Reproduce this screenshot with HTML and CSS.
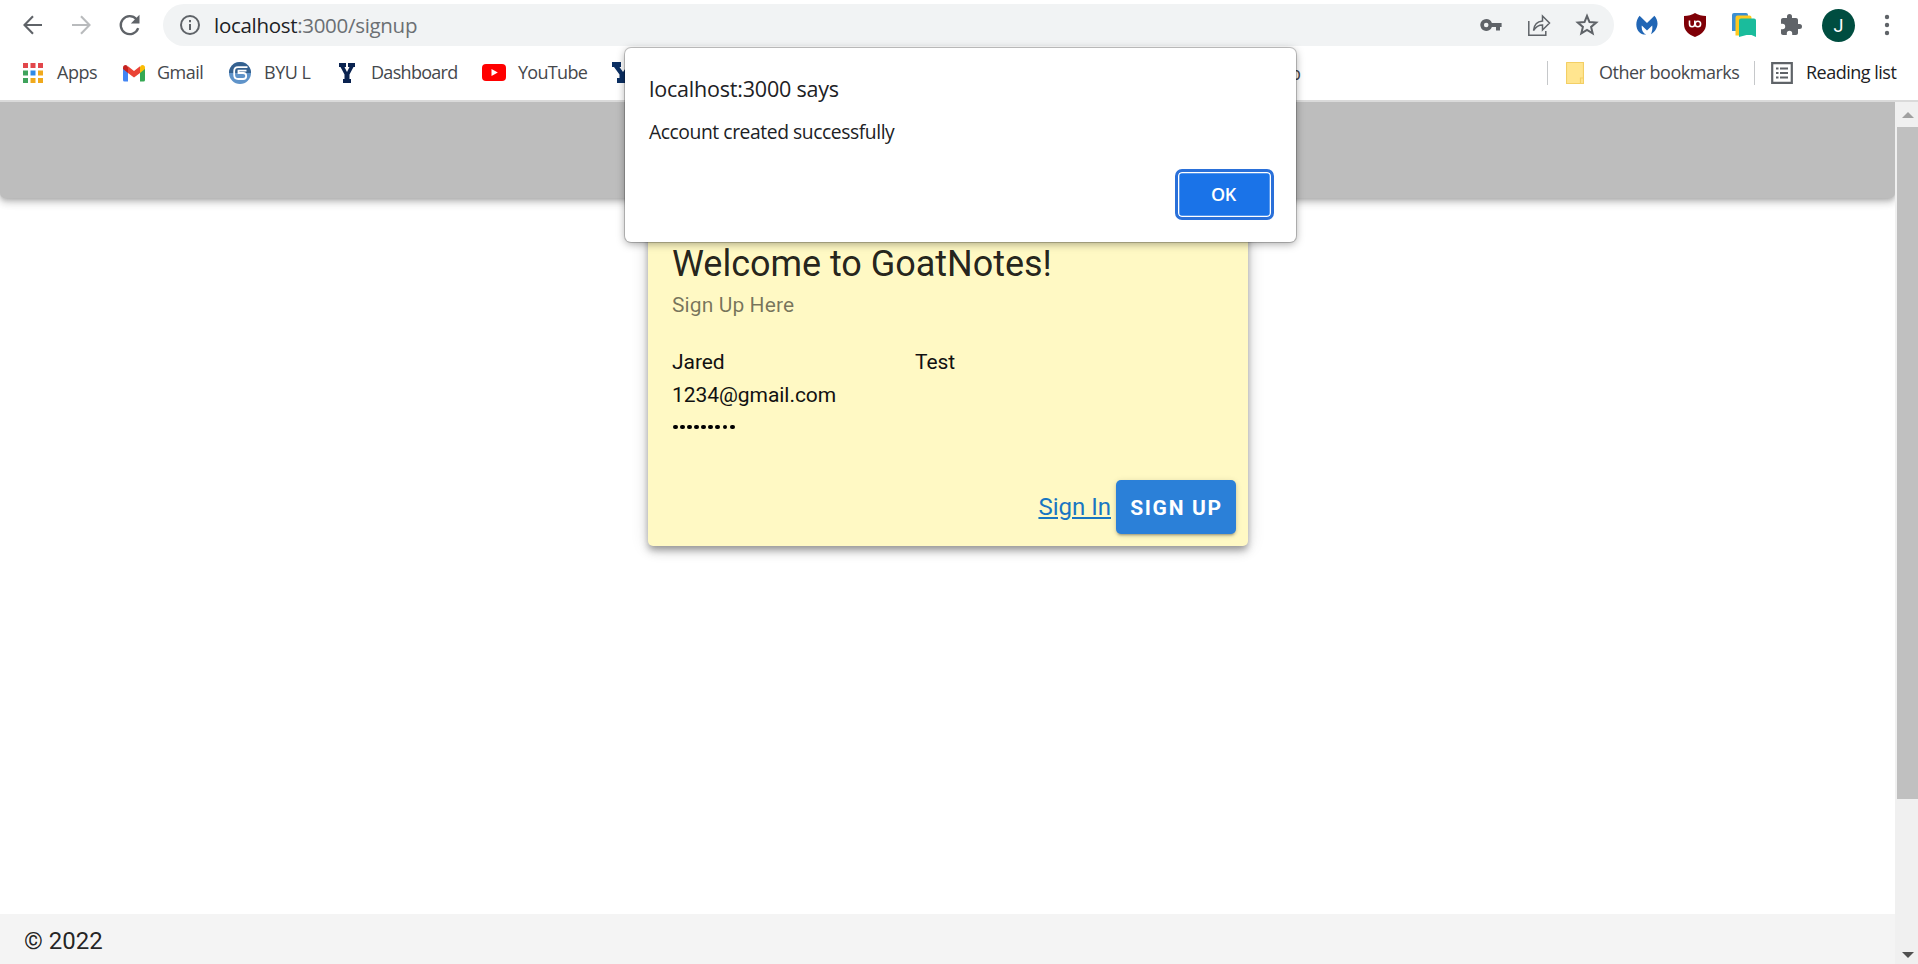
FILE: index.html
```
<!DOCTYPE html>
<html lang="en">
<head>
<meta charset="utf-8">
<title>GoatNotes</title>
<link rel="stylesheet" href="styles.css">
</head>
<body>
<div class="browser">
  <div class="toolbar">
    <div class="nav">
      <svg class="ic24" viewBox="0 0 24 24"><path d="M21 12H4M12 3.300 3.500 12 12 20.700" fill="none" stroke="#5f6368" stroke-width="2.100"/></svg>
      <svg class="ic24" viewBox="0 0 24 24"><path d="M3 12h17M12 3.300 20.500 12 12 20.700" fill="none" stroke="#b9bbbd" stroke-width="2.100"/></svg>
      <svg class="ic24 reload" viewBox="0 0 24 24"><path d="M20.200 15.200A9 9 0 1 1 18.500 6.200" fill="none" stroke="#5f6368" stroke-width="2.300"/><path d="M21.500 1.800v8.700h-8.700z" fill="#5f6368"/></svg>
    </div>
    <div class="omnibox">
      <svg class="info" viewBox="0 0 22 22"><circle cx="11" cy="11" r="9" fill="none" stroke="#5f6368" stroke-width="2"/><path d="M10 10h2v6h-2zM10 6h2v2.200h-2z" fill="#5f6368"/></svg>
      <span class="url">localhost<span class="path">:3000/signup</span></span>
      <div class="omni-icons">
        <svg class="ic24" viewBox="0 0 24 24"><path fill-rule="evenodd" fill="#5f6368" d="M7.200 6a6 6 0 1 0 5.700 8H17v3.500h4V14h1.600v-4h-9.700A6 6 0 0 0 7.200 6zm0 3.700a2.300 2.300 0 1 1 0 4.600 2.300 2.300 0 0 1 0-4.600z"/></svg>
        <svg class="ic24" viewBox="0 0 24 24"><path d="M1.800 8v14.200h17V18M6.500 17.500c.5-5.500 3-9 9-9.500V3l7 7-7 7v-5c-4 0-6.500 1.500-9 5.500z" fill="none" stroke="#5f6368" stroke-width="1.500"/></svg>
        <svg class="ic24" viewBox="0 0 24 24"><path d="m12 3 2.500 6.100 6.700.5-5.100 4.300 1.600 6.500-5.700-3.500-5.700 3.500 1.600-6.500-5.100-4.300 6.700-.5z" fill="none" stroke="#5f6368" stroke-width="2"/></svg>
      </div>
    </div>
    <div class="extensions">
      <svg class="ic24" viewBox="0 0 24 24"><path d="M4.600 2.800 12 10l7.400-7.200c3.600 4 4 9 1.600 13.200-1 2-2.500 3.800-5 5.200 1-2.500 1.700-5.200 1.200-8.600L12 17.500l-5.200-4.900c-.6 4.300 1.200 7.400 4.400 9C2 22-2 10.500 4.600 2.800z" fill="#2166b5"/></svg>
      <svg class="ic24" viewBox="0 0 24 24"><path d="M12 0c3 2 7 3 11 3v8c0 7-5 10.500-11 13C6 21.500 1 18 1 11V3c4 0 8-1 11-3z" fill="#7f0007"/><path d="M6.500 7.500V11q0 2.800 2.600 2.800T11.800 11V7.500" fill="none" stroke="#fff" stroke-width="1.600"/><circle cx="14.900" cy="11" r="2.700" fill="none" stroke="#fff" stroke-width="1.600"/></svg>
      <svg class="tabs" viewBox="0 0 26 26"><path d="M1 3q0-2 2-2h12q2 0 2 2v3H7v13H1z" fill="#3c8fd1"/><path d="M4.500 5.500q0-2 2-2h12q2 0 2 2v3H10v15H4.500z" fill="#ffc91f"/><path d="M8 8.500q0-2 2-2h13q2 0 2 2V25l-4.500-2h-5L8 25z" fill="#1abc9c"/></svg>
      <svg class="ic24" viewBox="0 0 24 24"><path d="M20.500 11H19V7c0-1.100-.9-2-2-2h-4V3.500a2.500 2.500 0 0 0-5 0V5H4c-1.100 0-2 .9-2 2v3.800h1.500a2.700 2.700 0 0 1 0 5.400H2V20c0 1.100.9 2 2 2h3.800v-1.500a2.700 2.700 0 0 1 5.400 0V22H17c1.100 0 2-.9 2-2v-4h1.500a2.500 2.500 0 0 0 0-5z" fill="#5f6368"/></svg>
      <span class="avatar">J</span>
      <svg class="ic24" viewBox="0 0 24 24"><g fill="#5f6368"><circle cx="12" cy="4" r="2.200"/><circle cx="12" cy="12" r="2.200"/><circle cx="12" cy="20" r="2.200"/></g></svg>
    </div>
  </div>

  <div class="bookmarks">
    <div class="bm bm-apps">
      <svg class="bm-ic" viewBox="0 0 22 22"><path d="M1 1h5v5H1zM8.500 1h5v5h-5zM16 1h5v5h-5z" fill="#e2474b"/><path d="M1 8.500h5v5H1zM1 16h5v5H1z" fill="#3fa35c"/><path d="M8.500 8.500h5v5h-5z" fill="#2f8ae8"/><path d="M16 8.500h5v5h-5zM8.500 16h5v5h-5zM16 16h5v5h-5z" fill="#f0a91c"/></svg>
      <span class="t-apps">Apps</span>
    </div>
    <div class="bm bm-gmail">
      <svg class="bm-ic" viewBox="0 0 22 22"><path d="M0 6v12q0 1.500 1.500 1.500H5V9z" fill="#4285f4"/><path d="M22 6v12q0 1.500-1.500 1.500H17V9z" fill="#34a853"/><path d="M17 5v6l5-4V5.500c0-2.500-2.500-3.200-4-2z" fill="#fbbc04"/><path d="M5 5v6L0 7V5.500c0-2.500 2.500-3.200 4-2z" fill="#c5221f"/><path d="M5 4.300 11 9l6-4.700V11l-6 4.500L5 11z" fill="#ea4335"/></svg>
      <span class="t-gmail">Gmail</span>
    </div>
    <div class="bm bm-byul">
      <svg class="bm-ic" viewBox="0 0 22 22"><circle cx="11" cy="11" r="11" fill="#5f93c9"/><path d="M0 11a11 11 0 0 1 22 0z" fill="#35618f"/><path d="M18.500 5.200H9Q5.200 5.200 5.200 9v4q0 4 4 4h5q3 0 3-3t-3-3H9.500V8.700h8" fill="none" stroke="#fff" stroke-width="1.800"/></svg>
      <span class="t-byul">BYU L</span>
    </div>
    <div class="bm bm-dash">
      <svg class="y-ic" viewBox="0 0 16 20"><path d="M0 0h7v4H5.500L8 9l2.500-5H9V0h7v4h-1.500L10.500 11.500V16H12v4H4v-4h1.500v-4.500L1.500 4H0z" fill="#0a2350"/></svg>
      <span class="t-dash">Dashboard</span>
    </div>
    <div class="bm bm-yt">
      <svg class="yt-ic" viewBox="0 0 24 17"><rect width="24" height="17" rx="4" fill="#f00"/><path d="m9.500 5 6.300 3.500-6.300 3.500z" fill="#fff"/></svg>
      <span class="t-yt">YouTube</span>
    </div>
    <svg class="y2-ic" viewBox="0 0 22 21"><path d="M0 0h9v5H7.500L11 10l3.500-5H13V0h9v5h-2l-5.500 7.500V16H17v5H5v-5h2.500v-3.500L2 5H0z" fill="#0b2f63"/></svg>
    <span class="cut">Map</span>
    <div class="bm-right">
      <i class="sep"></i>
      <svg class="folder" viewBox="0 0 18 22"><path d="M0 0h17.500v15H18v7H0z" fill="#ffe58f"/><path d="M.5.500h17V16M.5.500v21h17V16h-3v5.500" fill="none" stroke="#f3cf65" stroke-width="1.200"/></svg>
      <span class="t-other">Other bookmarks</span>
      <i class="sep sep2"></i>
      <svg class="list-ic" viewBox="0 0 22 22"><path d="M1.200 1.200h19.600v19.600H1.200z" fill="none" stroke="#5f6368" stroke-width="2.200"/><path d="M5 5.500h2.500v2H5zm4 0h8v2H9zM5 10h2.500v2H5zm4 0h8v2H9zM5 14.500h2.500v2H5zm4 0h8v2H9z" fill="#5f6368"/></svg>
      <span class="t-read">Reading list</span>
    </div>
  </div>

  <div class="viewport">
    <div class="page">
      <header class="appbar"></header>
      <main class="main">
        <section class="card">
          <h1 class="title"><span>Welcome to GoatNotes!</span></h1>
          <p class="subtitle">Sign Up Here</p>
          <div class="fields">
            <div class="field">Jared</div>
            <div class="field">Test</div>
            <div class="field email">1234@gmail.com</div>
            <div class="dots"><i></i><i></i><i></i><i></i><i></i><i></i><i></i><i></i><i></i></div>
          </div>
          <div class="actions">
            <a class="signin">Sign In</a>
            <button class="signup">SIGN UP</button>
          </div>
        </section>
      </main>
      <footer class="footer"><span>© 2022</span></footer>
    </div>
    <div class="scrollbar">
      <svg class="arrow" viewBox="0 0 12 6"><path d="M0 6 6 0l6 6z" fill="#a0a0a0"/></svg>
      <div class="thumb"></div>
      <svg class="arrow down" viewBox="0 0 12 6"><path d="M0 0h12L6 6z" fill="#505050"/></svg>
    </div>
  </div>
</div>

<div class="dialog">
  <div class="dlg-title"><span>localhost:3000 says</span></div>
  <div class="dlg-msg"><span>Account created successfully</span></div>
  <button class="ok">OK</button>
</div>
</body>
</html>
```
FILE: styles.css
```
* { box-sizing: border-box; }
body { margin: 0; width: 1918px; height: 964px; overflow: hidden; background: #fff; font-family: "Open Sans", sans-serif; }
svg { display: block; flex: none; }
.browser { display: flex; flex-direction: column; height: 964px; }
.toolbar { display: flex; align-items: center; height: 50px; padding-left: 21px; flex: none; }
.nav { display: flex; gap: 24px; width: 142px; flex: none; }
.ic24 { width: 24px; height: 24px; }
.reload { margin-left: 1px; }
.omnibox { display: flex; align-items: center; flex: none; width: 1451px; height: 42px; border-radius: 21px; background: #f1f3f4; padding-left: 16px; }
.info { width: 22px; height: 22px; margin-right: 13px; }
.url { font-size: 20.500px; letter-spacing: -.3px; color: #202124; white-space: nowrap; line-height: 28px; }
.path { color: #6b6f73; }
.omni-icons { display: flex; gap: 24px; margin-left: auto; margin-right: 15px; }
.extensions { display: flex; align-items: center; margin-left: 21px; }
.extensions > * { margin-right: 24px; flex: none; }
.extensions > .tabs { width: 26px; height: 26px; margin-right: 22px; }
.extensions > .avatar { width: 33px; height: 33px; margin: 0 20px 0 -5px; border-radius: 50%; background: #004d40; color: #fff; font: 18px/33px Roboto, sans-serif; text-align: center; }

.bookmarks { display: flex; align-items: center; height: 50px; padding: 0 19px 5px 22px; flex: none; font-size: 18px; line-height: 24px; color: #45484c; white-space: nowrap; }
.bm { display: flex; align-items: center; }
.bm-ic { width: 22px; height: 22px; }
.bm-apps { width: 101px; gap: 13px; }
.bm-gmail { width: 106px; gap: 12px; }
.bm-byul { width: 110px; gap: 13px; }
.bm-dash { width: 143px; gap: 16px; }
.bm-yt { width: 130px; gap: 12px; }
.y-ic { width: 16px; height: 20px; }
.yt-ic { width: 24px; height: 17px; }
.y2-ic { width: 22px; height: 21px; }
.cut { width: 42px; margin-left: 625px; text-align: right; }
.bm-right { display: flex; align-items: center; margin-left: auto; }
.sep { width: 1px; height: 24px; background: #c6c8ca; margin-right: 18px; }
.sep2 { margin: 0 16px 0 17px; }
.folder { width: 18px; height: 22px; margin-right: 15px; }
.list-ic { width: 22px; height: 22px; margin-right: 13px; }
.t-other { width: 138px; }
.t-read { width: 93px; color: #202124; }
.bm span, .t-other, .t-read { letter-spacing: -.5px; padding-bottom: 2px; }
.bm .t-dash, .bm .t-yt { letter-spacing: -.7px; }

.viewport { display: flex; flex: 1; border-top: 2px solid #dadada; }
.page { display: flex; flex-direction: column; width: 1895px; color: rgba(0,0,0,.87); font-family: Roboto, sans-serif; overflow: hidden; }
.appbar { height: 96px; background: #bdbdbd; border-radius: 0 0 5px 5px; box-shadow: 0 2px 5px -1px rgba(0,0,0,.2), 0 5px 7px rgba(0,0,0,.14), 0 1px 13px rgba(0,0,0,.12); flex: none; }
.main { flex: 1; padding: 21px 0 0 648px; }
.card { width: 600px; height: 327px; padding: 21px 12px 12px 24px; background: #fff9c4; border-radius: 5px; display: flex; flex-direction: column; box-shadow: 0 4px 6px -1px rgba(0,0,0,.25), 0 6px 10px rgba(0,0,0,.16), 0 1px 18px rgba(0,0,0,.14); }
.title { margin: 0; font-size: 36px; font-weight: 400; line-height: 48px; letter-spacing: -.03px; white-space: nowrap; }
.subtitle { margin: 2px 0 0; font-size: 21px; line-height: 30px; letter-spacing: .1px; color: rgba(0,0,0,.54); }
.fields { display: grid; grid-template-columns: 243px 245px; grid-template-rows: 33px 33px 30px; margin-top: 26px; font-size: 21px; line-height: 33px; letter-spacing: -.05px; color: #111; }
.email, .dots { grid-column: 1 / 3; }
.dots { display: flex; align-items: center; gap: 2.200px; padding-left: 1px; }
.dots i { width: 4.900px; height: 4.900px; border-radius: 50%; background: #000; }
.actions { display: flex; align-items: center; justify-content: flex-end; gap: 5px; margin-top: auto; }
.signin { font-size: 24px; color: #1976c2; text-decoration: underline; }
.signup { width: 120px; height: 54px; border: 0; border-radius: 5px; padding: 2px 0 0 1px; background: #2b80d8; color: #fff; font: 700 21px Roboto, sans-serif; letter-spacing: 1.700px; box-shadow: 0 3px 2px -2px rgba(0,0,0,.2), 0 2px 3px rgba(0,0,0,.14), 0 1px 6px rgba(0,0,0,.12); }
.footer { height: 50px; padding-left: 24px; background: #f4f4f4; font-size: 24px; line-height: 54px; flex: none; }
.scrollbar { width: 23px; background: #f0f0f0; padding-left: 2px; display: flex; flex-direction: column; align-items: center; }
.arrow { width: 12px; height: 6px; margin: 10px 0 9px; }
.thumb { width: 21px; height: 672px; background: #c0c0c0; }
.down { margin: auto 0 6px; }

.dialog { position: absolute; left: 625px; top: 48px; width: 671px; height: 194px; padding: 24px 22px 0 24px; display: flex; flex-direction: column; background: #fff; border-radius: 6px; color: #202124; white-space: nowrap; box-shadow: 0 0 0 1px rgba(0,0,0,.2), 0 2px 8px rgba(0,0,0,.35); }
.dlg-title { font-size: 21.500px; line-height: 34px; letter-spacing: -.2px; }
.dlg-msg { font-size: 19.300px; line-height: 28px; margin-top: 12px; letter-spacing: -.43px; }
.ok { width: 99px; height: 51px; margin: 23px 0 0 auto; padding: 0 2px 1px 0; border: 3px solid #2a70d9; border-radius: 7px; background: #1a73e8; color: #fff; font: 600 18px "Open Sans", sans-serif; letter-spacing: -.3px; box-shadow: inset 0 0 0 1.300px #fff; align-self: flex-end; }
```
